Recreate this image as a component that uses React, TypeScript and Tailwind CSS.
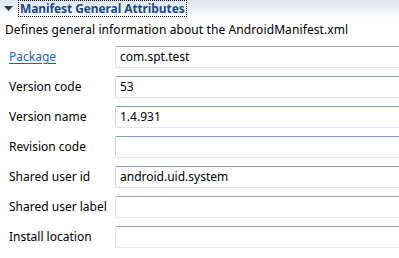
const rows = [
  { label: 'Package', value: 'com.spt.test', link: true, active: false },
  { label: 'Version code', value: '53', active: true },
  { label: 'Version name', value: '1.4.931', active: true },
  { label: 'Revision code', value: '', active: true },
  { label: 'Shared user id', value: 'android.uid.system', active: true },
  { label: 'Shared user label', value: '', active: false },
  { label: 'Install location', value: '', active: false },
];

const App = () => {
  return (
    <div
      className="w-[399px] h-[258px] overflow-hidden bg-white text-[12px] text-black"
      style={{ fontFamily: '"Noto Sans", "DejaVu Sans", sans-serif' }}
    >
      {/* Section header */}
      <div className="h-[18px] flex items-start bg-gradient-to-b from-[#dbe4ef] to-white">
        <svg width="9" height="6" viewBox="0 0 9 6" className="ml-[4px] mt-[6px]">
          <path d="M0 0 L9 0 L4.5 5 Z" fill="#1f3f66" />
        </svg>
        <div className="ml-[5px] h-[17px] px-[1px] border border-dotted border-black flex items-center">
          <span className="font-bold text-[12px] leading-none text-[#1d4b85] tracking-[-0.1px]">
            Manifest General Attributes
          </span>
        </div>
      </div>

      <p className="ml-[5px] mt-[4px] leading-[16px] tracking-[0.1px]">
        Defines general information about the AndroidManifest.xml
      </p>

      {/* Attribute rows */}
      <div className="mt-[8px] pl-[9px] flex flex-col gap-[8px]">
        {rows.map((row) => (
          <div key={row.label} className="flex items-center h-[22px]">
            <div className="w-[106px] shrink-0 leading-none">
              {row.link ? (
                <span className="text-[#1a5fd0] underline underline-offset-2">{row.label}</span>
              ) : (
                row.label
              )}
            </div>
            <div
              className={`flex-1 h-[22px] mr-[-4px] rounded-[2px] border flex items-center pl-[4px] ${
                row.active
                  ? 'border-[#c6d6e6] border-t-[#7f9db9] border-b-[#dce7f2]'
                  : 'border-[#e2e3ea] border-t-[#a8a9ae] border-b-[#e6e8ef]'
              }`}
            >
              {row.value}
            </div>
          </div>
        ))}
      </div>
    </div>
  );
};

export default App;
